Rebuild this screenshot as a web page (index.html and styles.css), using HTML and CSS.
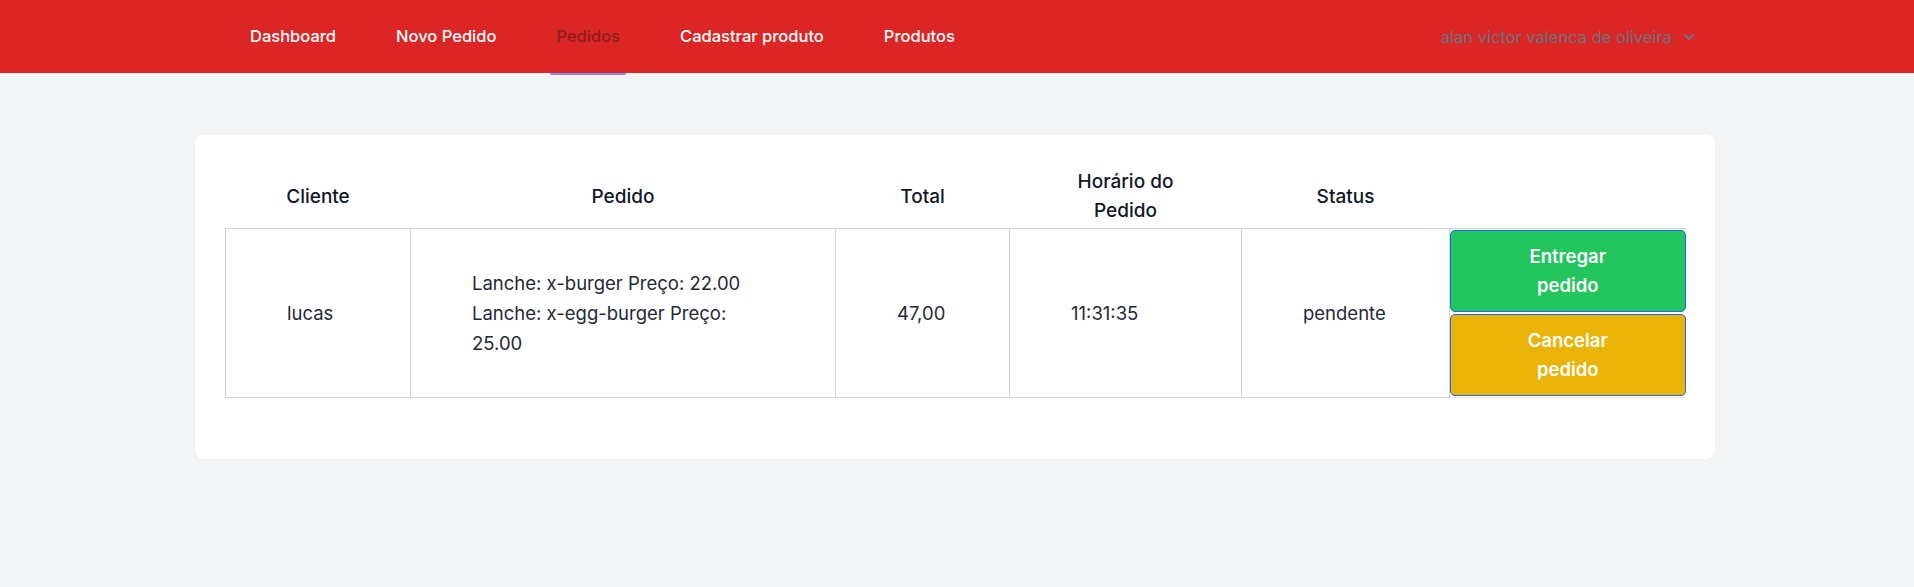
FILE: index.html
```html
<!DOCTYPE html>
<html lang="pt-BR">
<head>
<meta charset="utf-8">
<title>Pedidos</title>
<link rel="stylesheet" href="styles.css">
</head>
<body>
<nav class="topnav">
  <div class="nav-links">
    <a class="nav-link" href="#">Dashboard</a>
    <a class="nav-link" href="#">Novo Pedido</a>
    <a class="nav-link active" href="#">Pedidos</a>
    <a class="nav-link" href="#">Cadastrar produto</a>
    <a class="nav-link" href="#">Produtos</a>
  </div>
  <div class="user-menu">
    <span class="user-name">alan victor valenca de oliveira</span>
    <svg class="chevron" width="20" height="20" viewBox="0 0 20 20" fill="currentColor"><path fill-rule="evenodd" d="M5.293 7.293a1 1 0 011.414 0L10 10.586l3.293-3.293a1 1 0 111.414 1.414l-4 4a1 1 0 01-1.414 0l-4-4a1 1 0 010-1.414z" clip-rule="evenodd"/></svg>
  </div>
</nav>
<main class="main">
  <div class="card">
    <table class="orders">
      <colgroup>
        <col class="c-cliente">
        <col class="c-pedido">
        <col class="c-total">
        <col class="c-hora">
        <col class="c-status">
        <col class="c-acoes">
      </colgroup>
      <thead>
        <tr>
          <th>Cliente</th>
          <th>Pedido</th>
          <th>Total</th>
          <th>Horário do<br>Pedido</th>
          <th>Status</th>
          <th></th>
        </tr>
      </thead>
      <tbody>
        <tr>
          <td>lucas</td>
          <td><div class="items"><div>Lanche: x-burger Preço: 22.00</div><div>Lanche: x-egg-burger Preço: 25.00</div></div></td>
          <td>47,00</td>
          <td>11:31:35</td>
          <td>pendente</td>
          <td class="actions">
            <button class="btn btn-green">Entregar pedido</button>
            <button class="btn btn-yellow">Cancelar pedido</button>
          </td>
        </tr>
      </tbody>
    </table>
  </div>
</main>
</body>
</html>
```
FILE: styles.css
```css
* { box-sizing: border-box; }
html, body { margin: 0; padding: 0; }
body {
  background: #f3f4f6;
  font-family: Inter, "Noto Sans", "Liberation Sans", sans-serif;
  color: #1f2937;
}
.topnav {
  height: 73px;
  background: #dc2626;
  display: flex;
  justify-content: space-between;
  align-items: flex-start;
  padding: 0 215px 0 244px;
}
.nav-links {
  display: flex;
  gap: 48px;
}
.nav-link {
  height: 75px;
  display: flex;
  align-items: center;
  padding: 0 6px 2px;
  border-bottom: 2px solid transparent;
  color: #ffffff;
  text-decoration: none;
  font-size: 16.5px;
  font-weight: 500;
}
.nav-link.active {
  color: #8f1d1d;
  border-bottom-color: #818cf8;
}
.user-menu {
  height: 73px;
  display: flex;
  align-items: center;
  gap: 7px;
  color: #6b7280;
  font-size: 16.5px;
  font-weight: 400;
}
.chevron { display: block; }
.main {
  padding: 62px 0 0 195px;
}
.card {
  width: 1520px;
  background: #ffffff;
  border-radius: 8px;
  box-shadow: 0 1px 2px rgba(0,0,0,0.05);
  padding: 30px 30px 61px;
}
.orders {
  width: 1460px;
  table-layout: fixed;
  border-collapse: collapse;
}
.c-cliente { width: 185px; }
.c-pedido { width: 425px; }
.c-total { width: 174px; }
.c-hora { width: 232px; }
.c-status { width: 208px; }
.c-acoes { width: 236px; }
.orders th {
  height: 63px;
  padding: 0;
  font-size: 19px;
  font-weight: 500;
  line-height: 29px;
  color: #111827;
  text-align: center;
}
.orders td {
  border: 1px solid #cbd5e1;
  padding: 0 61px;
  font-size: 18.5px;
  line-height: 30px;
  text-align: left;
  vertical-align: middle;
}
.orders td.actions {
  padding: 1px 0 1px;
  border-right: none;
  border-bottom-color: #e5e7eb;
}
.items { max-width: 290px; }
.btn {
  display: block;
  width: 100%;
  height: 82px;
  border: 1px solid #2563eb;
  border-radius: 5px;
  color: #ffffff;
  font-family: inherit;
  font-size: 18.5px;
  font-weight: 600;
  line-height: 29px;
  padding: 0 55px;
  text-align: center;
  cursor: pointer;
}
.btn + .btn { margin-top: 2px; }
.btn-green { background: #22c55e; }
.btn-yellow { background: #eab308; }
```
